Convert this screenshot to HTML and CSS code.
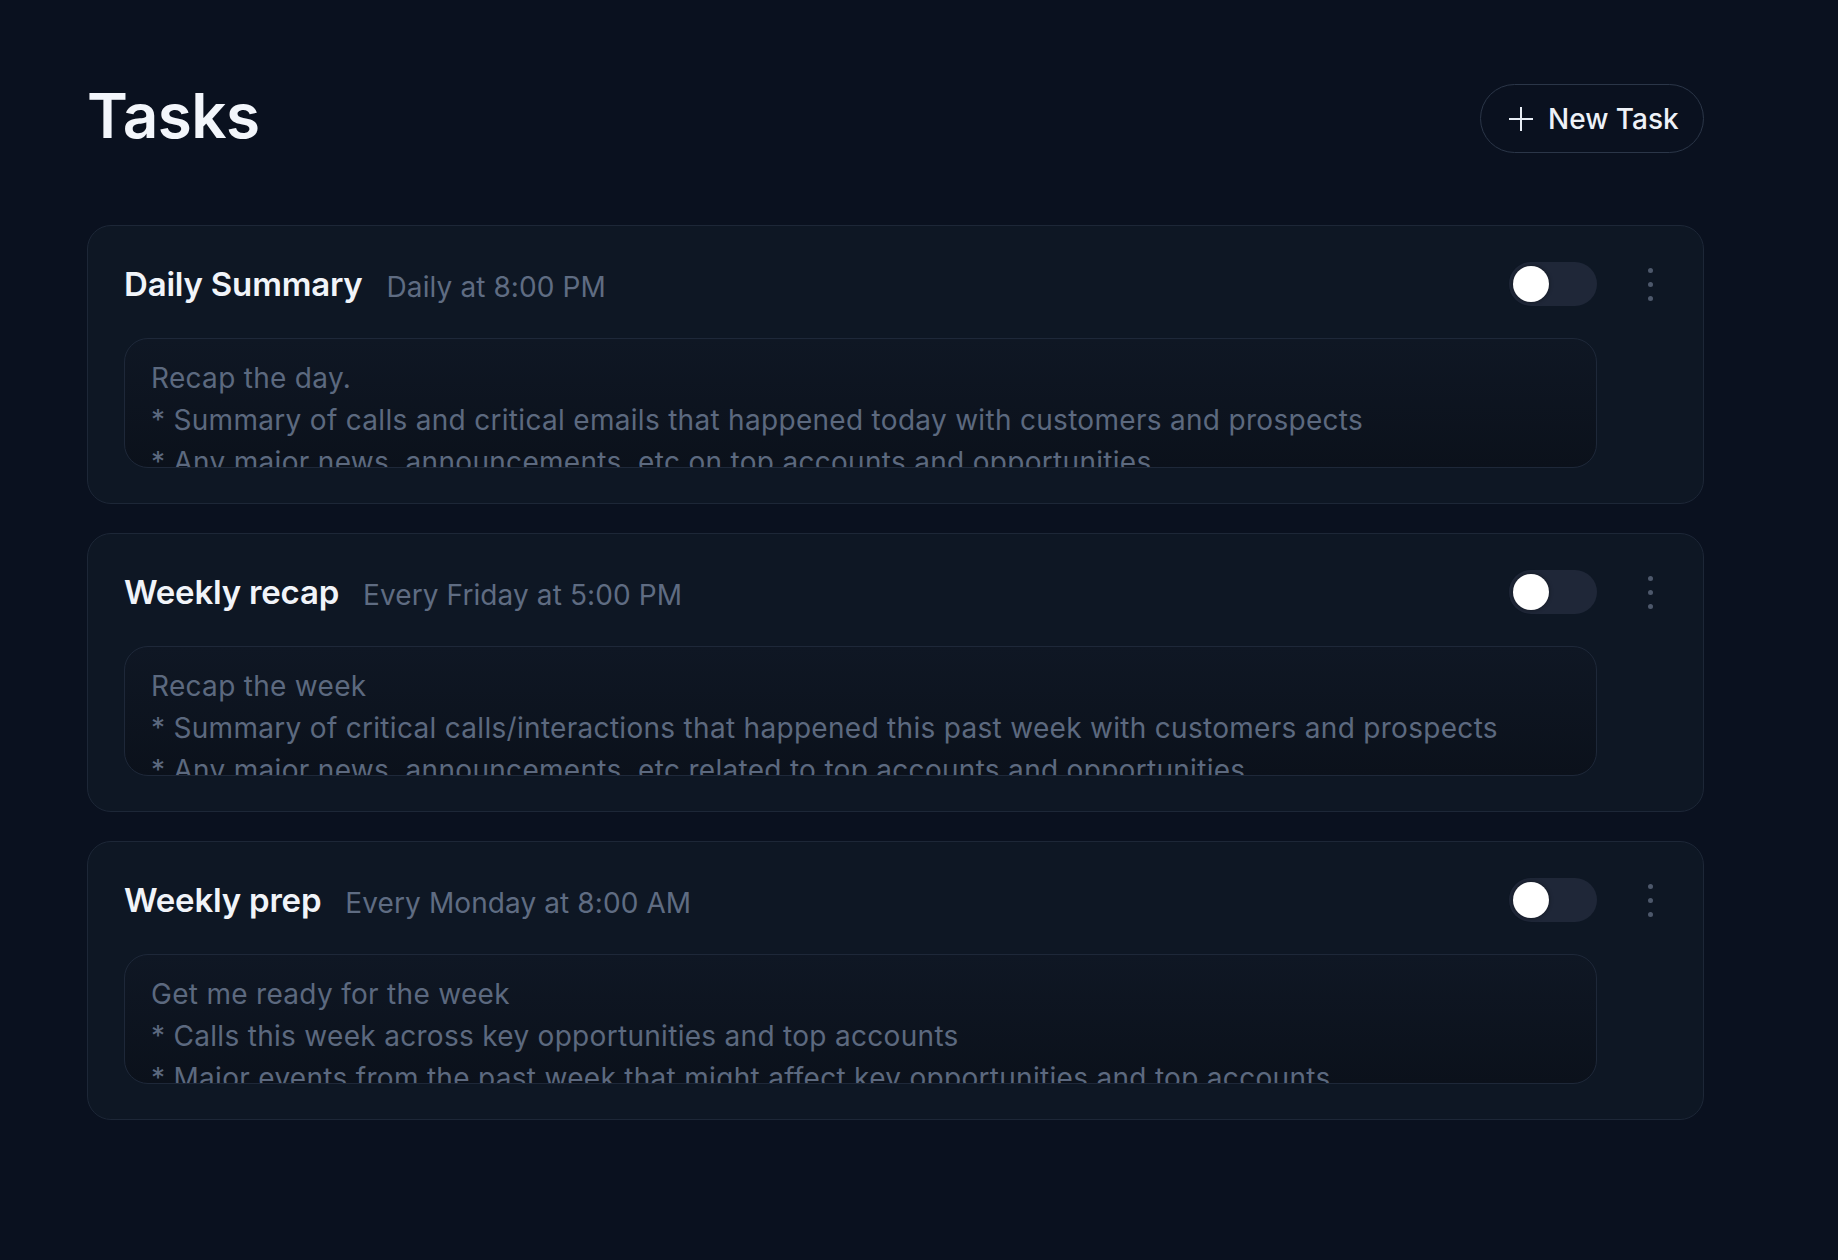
FILE: index.html
```html
<!DOCTYPE html>
<html lang="en">
<head>
<meta charset="utf-8">
<title>Tasks</title>
<link rel="stylesheet" href="styles.css">
</head>
<body>
<main class="page">
  <header class="header">
    <h1 class="title">Tasks</h1>
    <button class="new-btn" type="button">
      <svg class="plus" width="26" height="26" viewBox="0 0 26 26" aria-hidden="true"><path d="M13 1v24M1 13h24" stroke="#e8edf5" stroke-width="2" fill="none"/></svg>
      <span>New Task</span>
    </button>
  </header>

  <section class="list">
    <article class="card">
      <div class="main">
        <div class="row">
          <h2 class="name">Daily Summary</h2>
          <span class="sched">Daily at 8:00 PM</span>
          <span class="toggle"><span class="knob"></span></span>
        </div>
        <div class="prompt">
          <p>Recap the day.</p>
          <p>* Summary of calls and critical emails that happened today with customers and prospects</p>
          <p>* Any major news, announcements, etc on top accounts and opportunities</p>
        </div>
      </div>
      <button class="more" type="button" aria-label="More"><i></i><i></i><i></i></button>
    </article>

    <article class="card">
      <div class="main">
        <div class="row">
          <h2 class="name">Weekly recap</h2>
          <span class="sched">Every Friday at 5:00 PM</span>
          <span class="toggle"><span class="knob"></span></span>
        </div>
        <div class="prompt">
          <p>Recap the week</p>
          <p>* Summary of critical calls/interactions that happened this past week with customers and prospects</p>
          <p>* Any major news, announcements, etc related to top accounts and opportunities</p>
        </div>
      </div>
      <button class="more" type="button" aria-label="More"><i></i><i></i><i></i></button>
    </article>

    <article class="card">
      <div class="main">
        <div class="row">
          <h2 class="name">Weekly prep</h2>
          <span class="sched">Every Monday at 8:00 AM</span>
          <span class="toggle"><span class="knob"></span></span>
        </div>
        <div class="prompt">
          <p>Get me ready for the week</p>
          <p>* Calls this week across key opportunities and top accounts</p>
          <p>* Major events from the past week that might affect key opportunities and top accounts</p>
        </div>
      </div>
      <button class="more" type="button" aria-label="More"><i></i><i></i><i></i></button>
    </article>
  </section>
</main>
</body>
</html>
```

FILE: styles.css
```css
* { box-sizing: border-box; }
html, body {
  margin: 0;
  background: #0a111f;
  font-family: Inter, "Noto Sans", "Liberation Sans", sans-serif;
}
.page {
  padding: 78px 0 0 87px;
  width: 1704px;
}
.header {
  display: flex;
  justify-content: space-between;
  align-items: flex-end;
}
.title {
  margin: 0;
  font-size: 62px;
  font-weight: 600;
  color: #f3f6fb;
  letter-spacing: -0.6px;
  line-height: normal;
}
.new-btn {
  display: flex;
  align-items: center;
  gap: 14px;
  height: 69px;
  width: 224px;
  padding: 0 0 0 27px;
  border: 1.5px solid #2b3648;
  border-radius: 35px;
  background: transparent;
  color: #eef2f8;
  font-family: inherit;
  font-size: 28px;
  font-weight: 500;
}
.plus { display: block; }
.list {
  margin-top: 72px;
  display: flex;
  flex-direction: column;
  gap: 29px;
}
.card {
  display: flex;
  align-items: flex-start;
  gap: 36px;
  height: 279px;
  padding: 36px 36px 0 36px;
  background: #0e1724;
  border: 1px solid #1d2737;
  border-radius: 24px;
}
.main {
  flex: 1;
  min-width: 0;
}
.row {
  display: flex;
  align-items: center;
  height: 44px;
}
.name {
  margin: 0;
  font-size: 33px;
  font-weight: 600;
  color: #f1f4f9;
  letter-spacing: -0.2px;
}
.sched {
  margin-left: 24px;
  margin-top: 5px;
  font-size: 28px;
  color: #5f6c82;
  letter-spacing: 0.1px;
}
.toggle {
  margin-left: auto;
  width: 88px;
  height: 44px;
  border-radius: 22px;
  background: #1f2738;
  padding: 4px;
  display: flex;
}
.knob {
  width: 36px;
  height: 36px;
  border-radius: 50%;
  background: #ffffff;
  box-shadow: 0 0 4px rgba(0,0,0,0.45);
}
.prompt {
  margin-top: 32px;
  height: 130px;
  overflow: hidden;
  border: 1px solid #1e2839;
  border-radius: 24px;
  padding: 18px 26px 0 26px;
  background: linear-gradient(#0f1724, #0b111b);
  font-size: 28px;
  line-height: 42px;
  letter-spacing: 0.3px;
  color: #5c697f;
}
.prompt p { margin: 0; white-space: nowrap; }
.more {
  width: 34px;
  height: 44px;
  padding: 0;
  border: 0;
  background: transparent;
  display: flex;
  flex-direction: column;
  align-items: center;
  justify-content: center;
  gap: 9px;
}
.more i {
  display: block;
  width: 5px;
  height: 5px;
  border-radius: 50%;
  background: #4d586b;
}
```
